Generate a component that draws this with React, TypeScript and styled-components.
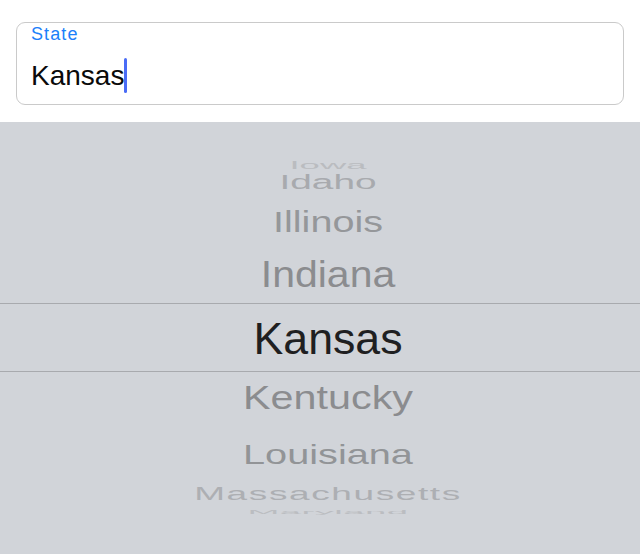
import React from "react";
import styled, { createGlobalStyle } from "styled-components";

const Global = createGlobalStyle`
  html, body { margin: 0; padding: 0; background: #ffffff; }
  body { font-family: "Liberation Sans", Arial, sans-serif; }
  * { box-sizing: border-box; }
`;

const Page = styled.div`
  width: 640px;
  height: 554px;
  display: flex;
  flex-direction: column;
  overflow: hidden;
`;

const FormArea = styled.div`
  background: #ffffff;
  padding: 22px 16px 17px 16px;
`;

const Field = styled.div`
  height: 83px;
  border: 1px solid #cacaca;
  border-radius: 9px;
  padding: 0 14px;
  display: flex;
  flex-direction: column;
`;

const Label = styled.label`
  font-size: 18px;
  line-height: 22px;
  letter-spacing: 1.1px;
  color: #1b80fa;
`;

const ValueRow = styled.div`
  margin-top: 12px;
  height: 36px;
  display: flex;
  align-items: center;
`;

const Value = styled.span`
  font-size: 28px;
  line-height: 36px;
  padding-top: 2px;
  color: #0a0a0a;
`;

const Caret = styled.span`
  width: 3px;
  height: 35px;
  border-radius: 2px;
  background: #4a6cf6;
`;

const PickerArea = styled.div`
  flex: 1;
  background: #d1d4d9;
  padding-top: 39px;
`;

const Viewport = styled.div`
  height: 355px;
  overflow: hidden;
  display: flex;
  flex-direction: column;
`;

const Row = styled.div<{ $h: number; $selected?: boolean }>`
  flex: none;
  height: ${(p) => p.$h}px;
  display: flex;
  align-items: center;
  justify-content: center;
  padding-left: 16px;
  border-top: ${(p) => (p.$selected ? "1px solid #a8aaae" : "none")};
  border-bottom: ${(p) => (p.$selected ? "1px solid #a8aaae" : "none")};
  padding-top: ${(p) => (p.$selected ? 3 : 0)}px;
`;

const Item = styled.span<{ $size: number; $sy: number; $color: string; $ls: number }>`
  display: block;
  white-space: nowrap;
  font-size: ${(p) => p.$size}px;
  letter-spacing: ${(p) => p.$ls}px;
  line-height: 1;
  color: ${(p) => p.$color};
  transform: scaleY(${(p) => p.$sy});
  transform-origin: center center;
`;

type Entry = { name: string; h: number; size: number; sy: number; color: string; ls: number; selected?: boolean };

const entries: Entry[] = [
  { name: "Iowa", h: 8, size: 36.5, sy: 0.28, color: "#babcc0", ls: 0 },
  { name: "Idaho", h: 27, size: 38.8, sy: 0.54, color: "#a8aaae", ls: 0 },
  { name: "Illinois", h: 51, size: 39.6, sy: 0.74, color: "#95979a", ls: 0 },
  { name: "Indiana", h: 56, size: 41, sy: 0.88, color: "#8b8c8f", ls: 0 },
  { name: "Kansas", h: 69, size: 44.7, sy: 0.99, color: "#1f1f21", ls: 0, selected: true },
  { name: "Kentucky", h: 53, size: 41.3, sy: 0.79, color: "#8b8c8f", ls: 0 },
  { name: "Louisiana", h: 60, size: 39.7, sy: 0.7, color: "#929497", ls: 0 },
  { name: "Massachusetts", h: 17, size: 37, sy: 0.49, color: "#adafb3", ls: 1.6 },
  { name: "Maryland", h: 20, size: 38.4, sy: 0.16, color: "#bbbdc1", ls: 0.4 },
];

export default function App() {
  return (
    <Page>
      <Global />
      <FormArea>
        <Field>
          <Label>State</Label>
          <ValueRow>
            <Value>Kansas</Value>
            <Caret />
          </ValueRow>
        </Field>
      </FormArea>
      <PickerArea>
        <Viewport>
          {entries.map((e) => (
            <Row key={e.name} $h={e.h} $selected={e.selected}>
              <Item $size={e.size} $sy={e.sy} $color={e.color} $ls={e.ls}>
                {e.name}
              </Item>
            </Row>
          ))}
        </Viewport>
      </PickerArea>
    </Page>
  );
}
